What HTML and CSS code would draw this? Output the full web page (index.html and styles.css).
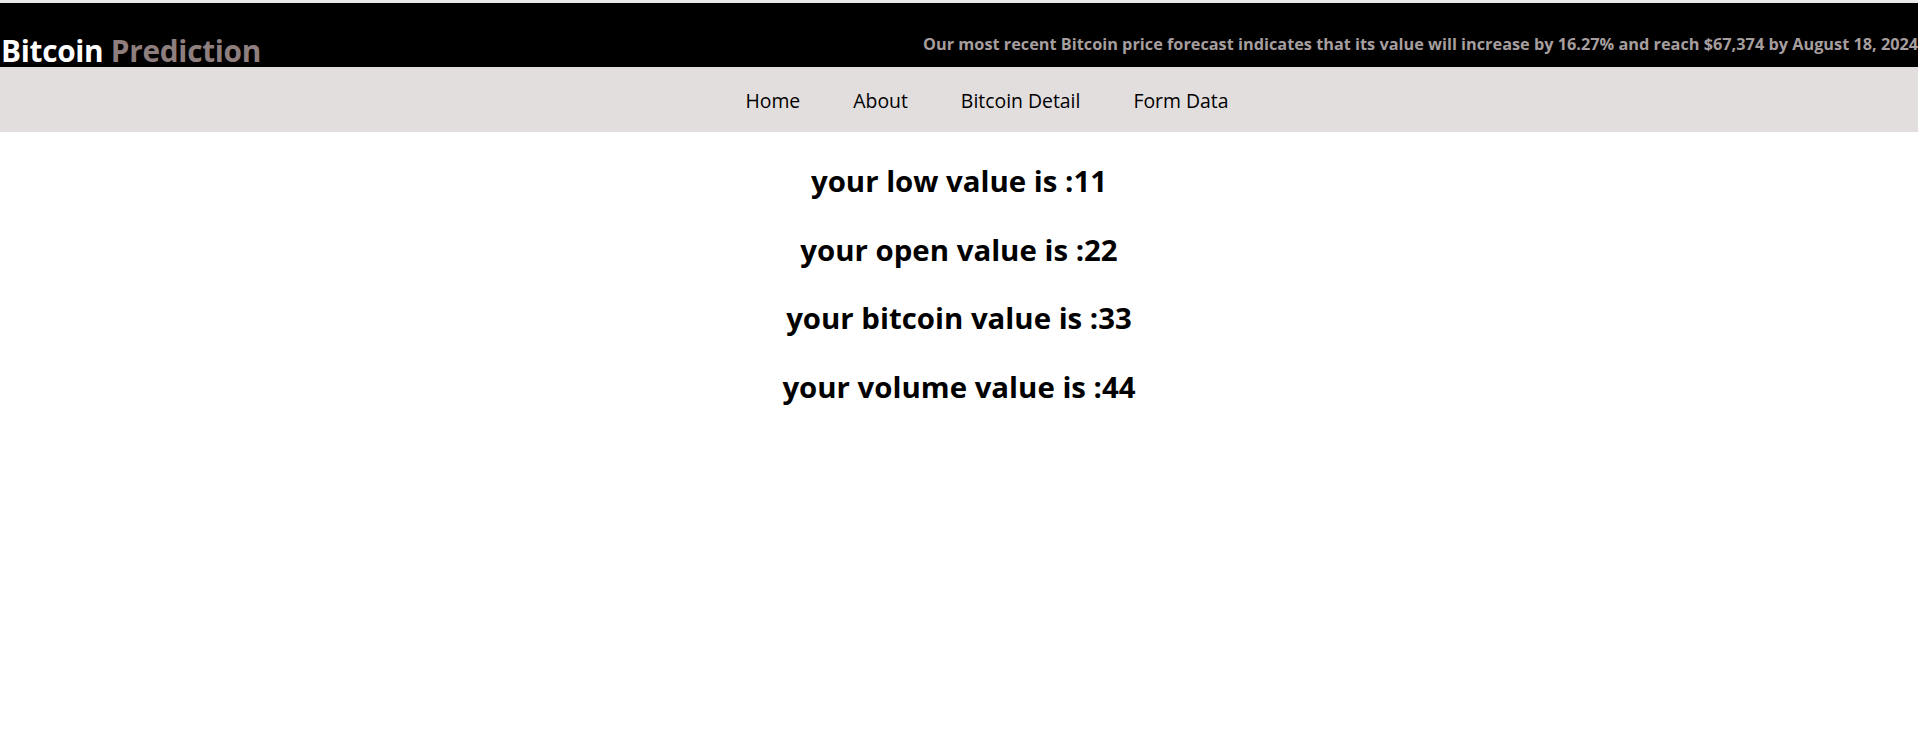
FILE: index.html
```html
<!DOCTYPE html>
<html lang="en">
<head>
<meta charset="utf-8">
<title>Bitcoin Prediction</title>
<link rel="stylesheet" href="styles.css">
</head>
<body>
<header class="topbar">
  <h1 class="brand"><span class="brand-main">Bitcoin</span> <span class="brand-sub">Prediction</span></h1>
  <div class="ticker"><span class="ticker-text">Our most recent Bitcoin price forecast indicates that its value will increase by 16.27% and reach $67,374 by August 18, 2024</span></div>
</header>
<nav class="menu">
  <a class="menu-link" href="#">Home</a>
  <a class="menu-link" href="#">About</a>
  <a class="menu-link" href="#">Bitcoin Detail</a>
  <a class="menu-link" href="#">Form Data</a>
</nav>
<main class="results">
  <h2 class="result">your low value is :11</h2>
  <h2 class="result">your open value is :22</h2>
  <h2 class="result">your bitcoin value is :33</h2>
  <h2 class="result">your volume value is :44</h2>
</main>
</body>
</html>
```
FILE: styles.css
```css
html, body {
  margin: 0;
  padding: 0;
  background: #ffffff;
  overflow-x: hidden;
}
body {
  font-family: "Open Sans", "Noto Sans", sans-serif;
  color: #000;
}
.topbar {
  border-top: 3px solid #ebe8e8;
  background: #000;
  height: 64px;
  display: flex;
  align-items: flex-end;
}
.brand {
  margin: 0;
  font-size: 29.8px;
  font-weight: 700;
  line-height: 1;
  padding-bottom: 1px;
  padding-left: 1px;
  white-space: nowrap;
  flex: none;
  letter-spacing: -0.3px;
}
.brand-main { color: #ffffff; }
.brand-sub { color: #8e7e7e; }
.ticker {
  flex: 1;
  overflow: hidden;
  white-space: nowrap;
  padding-bottom: 12px;
}
.ticker-text {
  display: inline-block;
  padding-left: 662px;
  color: #a69e9e;
  font-size: 16.3px;
  font-weight: 700;
  line-height: 1;
}
.menu {
  background: #e3dede;
  height: 65px;
  box-sizing: border-box;
  padding-top: 2px;
  display: flex;
  justify-content: center;
  align-items: center;
  gap: 53px;
  padding-left: 56px;
}
.menu-link {
  color: #000;
  text-decoration: none;
  font-size: 19.4px;
}
.results {
  display: flex;
  flex-direction: column;
  align-items: center;
  gap: 31.5px;
  padding-top: 31px;
}
.result {
  margin: 0;
  font-size: 29.4px;
  line-height: 37px;
  font-weight: 700;
}
```
